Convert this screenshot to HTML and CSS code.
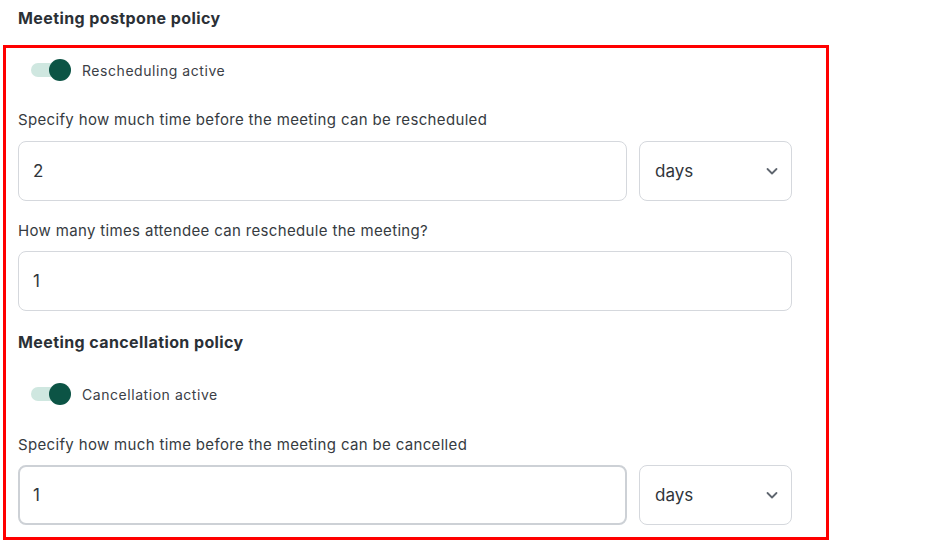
FILE: index.html
```html
<!DOCTYPE html>
<html lang="en">
<head>
<meta charset="utf-8">
<title>Meeting policy</title>
<link rel="stylesheet" href="styles.css">
</head>
<body>
<div class="page">
  <h2 class="title first">Meeting postpone policy</h2>
  <div class="box">
    <div class="toggle-row r1">
      <span class="switch"><span class="track"></span><span class="knob"></span></span>
      <span class="toggle-label">Rescheduling active</span>
    </div>
    <div class="label l1">Specify how much time before the meeting can be rescheduled</div>
    <div class="row">
      <div class="input grow"><span>2</span></div>
      <div class="input select"><span>days</span>
        <svg class="chev" width="14" height="14" viewBox="0 0 14 14"><path d="M2.5 5 L7 9.5 L11.5 5" fill="none" stroke="#5f666f" stroke-width="1.8" stroke-linecap="round" stroke-linejoin="round"/></svg>
      </div>
    </div>
    <div class="label l2">How many times attendee can reschedule the meeting?</div>
    <div class="row">
      <div class="input grow"><span>1</span></div>
    </div>
    <h2 class="title second">Meeting cancellation policy</h2>
    <div class="toggle-row r2">
      <span class="switch"><span class="track"></span><span class="knob"></span></span>
      <span class="toggle-label">Cancellation active</span>
    </div>
    <div class="label l3">Specify how much time before the meeting can be cancelled</div>
    <div class="row">
      <div class="input grow focus"><span>1</span></div>
      <div class="input select"><span>days</span>
        <svg class="chev" width="14" height="14" viewBox="0 0 14 14"><path d="M2.5 5 L7 9.5 L11.5 5" fill="none" stroke="#5f666f" stroke-width="1.8" stroke-linecap="round" stroke-linejoin="round"/></svg>
      </div>
    </div>
  </div>
</div>
</body>
</html>
```
FILE: styles.css
```css
* { box-sizing: border-box; }
html, body { margin: 0; padding: 0; background: #fff; }
body {
  font-family: Inter, "Open Sans", sans-serif;
  color: #363b41;
}
.page { padding: 7px 0 0 3px; width: 829px; }
.title {
  margin: 0;
  font-size: 16px;
  line-height: 22px;
  font-weight: 700;
  color: #2b3036;
  letter-spacing: 0.4px;
}
.title.first { padding-left: 15px; margin-bottom: 16px; }
.title.second { margin-top: 20px; }
.box {
  border: 3px solid #ff0000;
  padding: 0 34px 12px 12px;
}
.toggle-row {
  display: flex;
  align-items: center;
  margin-left: 13px;
  height: 22px;
}
.r1 { margin-top: 11px; }
.r2 { margin-top: 30px; }
.switch { position: relative; width: 40px; height: 22px; display: inline-block; }
.track {
  position: absolute; left: 0; top: 4px;
  width: 36px; height: 14px; border-radius: 7px;
  background: #cfe7e0;
}
.knob {
  position: absolute; left: 18px; top: 0;
  width: 22px; height: 22px; border-radius: 50%;
  background: #0c5445;
}
.toggle-label { margin-left: 11px; font-size: 14px; color: #3b4046; letter-spacing: 0.55px; }
.label { font-size: 15px; line-height: 22px; color: #363b41; letter-spacing: 0.34px; }
.l1 { margin-top: 28px; margin-bottom: 10px; }
.l2 { margin-top: 19px; margin-bottom: 9px; }
.l3 { margin-top: 29px; margin-bottom: 9px; }
.row { display: flex; gap: 12px; }
.input {
  height: 60px;
  border: 1px solid #d5d8dd;
  border-radius: 8px;
  display: flex;
  align-items: center;
  padding-left: 14px;
  font-size: 17px;
  color: #30353a;
}
.grow { flex: 1; }
.focus { border: 2px solid #cdd1d6; padding-left: 13px; }
.select {
  width: 153px;
  padding: 0 12px 0 15px;
  justify-content: space-between;
}
.chev { display: block; }
```
